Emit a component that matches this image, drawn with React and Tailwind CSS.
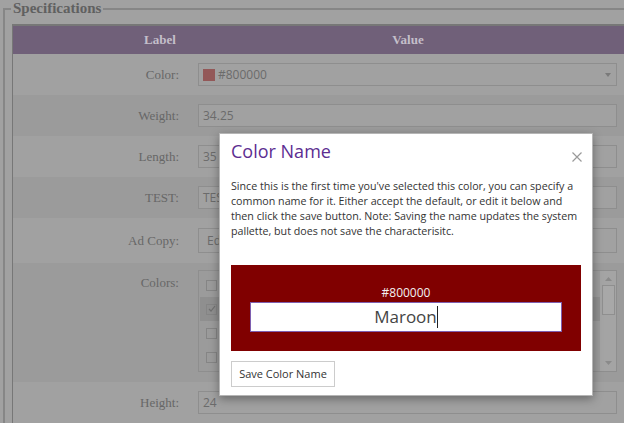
import React from 'react'

const serif = { fontFamily: '"Liberation Serif", "Times New Roman", serif' }
const sans = { fontFamily: '"Open Sans", "Noto Sans", sans-serif' }

function Row({ label, dark, h, top, children }) {
  return (
    <div className={`flex ${top ? 'items-start' : 'items-center'} ${h} ${dark ? 'bg-[#9b9b9b]' : ''}`}>
      <div
        className={`w-[176px] shrink-0 text-right pr-[10px] text-[13px] font-normal text-[#676767] ${top ? 'pt-[10px]' : ''}`}
        style={serif}
      >
        {label}
      </div>
      <div className={`flex-1 pl-[9px] pr-[7px] ${top ? 'pt-[7px]' : ''}`}>{children}</div>
    </div>
  )
}

function Field({ children, className = '' }) {
  return (
    <div
      className={`h-[23px] border border-[#8e8e8e] bg-[#a1a1a1] flex items-center pl-[4px] text-[12px] text-[#6b6b6b] ${className}`}
      style={sans}
    >
      {children}
    </div>
  )
}

function Check({ checked }) {
  return (
    <span className="w-[11px] h-[11px] border border-[#858585] flex items-center justify-center">
      {checked && (
        <svg width="8" height="8" viewBox="0 0 8 8">
          <path d="M1 4l2 2 4-5" fill="none" stroke="#707070" strokeWidth="1.2" />
        </svg>
      )}
    </span>
  )
}

function ColorList() {
  const items = [false, true, false, false]
  return (
    <div className="h-[102px] border border-[#8e8e8e] flex">
      <div className="flex-1 pt-[2px] pl-[1px]">
        {items.map((c, i) => (
          <div key={i} className={`h-[24px] flex items-center pl-[6px] ${c ? 'bg-[#8f8f8f]' : ''}`}>
            <Check checked={c} />
          </div>
        ))}
      </div>
      <div className="w-[16px] flex flex-col items-center justify-between py-[6px] bg-[#a4a4a4]">
        <svg width="7" height="4" viewBox="0 0 7 4"><path d="M0 4L3.5 0 7 4z" fill="#8a8a8a" /></svg>
        <div className="flex-1 w-[13px] flex flex-col">
          <div className="mt-[4px] h-[30px] border border-[#8f8f8f] bg-[#a8a8a8]" />
        </div>
        <svg width="7" height="4" viewBox="0 0 7 4"><path d="M0 0L3.5 4 7 0z" fill="#8a8a8a" /></svg>
      </div>
    </div>
  )
}

function ColorNameDialog() {
  return (
    <div className="absolute left-[219px] top-[133px] w-[374px] h-[263px] bg-white border border-[#b5b5b5] shadow-[0_3px_9px_rgba(0,0,0,0.35)] pl-[11px] pr-[11px]" style={sans}>
      <div className="flex items-start justify-between pt-[4px]">
        <h2 className="text-[18px] leading-[26px] text-[#5c2d91]">Color Name</h2>
        <svg className="mt-[14px] mr-[-1px]" width="10" height="10" viewBox="0 0 10 10">
          <path d="M0.5 0.5l9 9M9.5 0.5l-9 9" stroke="#9a9a9a" strokeWidth="1.2" />
        </svg>
      </div>
      <p className="mt-[15px] text-[10.7px] leading-[15px] text-[#333]">
        Since this is the first time you've selected this color, you can specify a<br />
        common name for it. Either accept the default, or edit it below and<br />
        then click the save button. Note: Saving the name updates the system<br />
        pallette, but does not save the characterisitc.
      </p>
      <div className="mt-[26px] h-[86px] bg-[#800000] px-[19px] pt-[20px]">
        <div className="text-center text-[12px] leading-[15px] text-[#f2f2f2]">#800000</div>
        <div className="mt-[2px] h-[30px] bg-white border border-[#7e5fb0] flex items-center justify-center text-[17px] text-[#444]">
          Maroon
          <span className="w-px h-[22px] bg-[#222]" />
        </div>
      </div>
      <button className="mt-[10px] h-[26px] w-[104px] border border-[#cccccc] bg-white text-[11px] text-[#333]">
        Save Color Name
      </button>
    </div>
  )
}

export default function App() {
  return (
    <div className="relative w-[624px] h-[423px] overflow-hidden bg-[#a1a1a1]">
      <fieldset className="ml-[3px] border-2 border-r-0 border-b-0 border-[#868686] w-[621px] h-[440px]">
        <legend className="ml-[6px] px-[2px] text-[15px] leading-[17px] font-bold text-[#606060]" style={serif}>
          Specifications
        </legend>
        <div className="ml-[7px] mt-[7px] border-t-2 border-l border-[#777777]">
          <div className="flex h-[28px] items-center bg-[#706079] text-[13px] font-bold text-[#c4bfca]" style={serif}>
            <div className="w-[294px] text-center">Label</div>
            <div className="w-[202px] text-center">Value</div>
          </div>
          <Row label="Color:" h="h-[41px]">
            <Field className="pr-[5px]">
              <span className="w-[12px] h-[12px] bg-[#935858] mr-[3px]" />
              <span className="flex-1">#800000</span>
              <svg width="6" height="4" viewBox="0 0 6 4"><path d="M0 0L3 4 6 0z" fill="#7a7a7a" /></svg>
            </Field>
          </Row>
          <Row label="Weight:" dark h="h-[41px]">
            <Field>34.25</Field>
          </Row>
          <Row label="Length:" h="h-[41px]">
            <Field>35</Field>
          </Row>
          <Row label="TEST:" dark h="h-[41px]">
            <Field>TEST</Field>
          </Row>
          <Row label="Ad Copy:" h="h-[45px]">
            <Field className="h-[25px] pl-[8px]">Edit</Field>
          </Row>
          <Row label="Colors:" dark top h="h-[119px]">
            <ColorList />
          </Row>
          <Row label="Height:" h="h-[41px]">
            <Field>24</Field>
          </Row>
        </div>
      </fieldset>
      <ColorNameDialog />
    </div>
  )
}
